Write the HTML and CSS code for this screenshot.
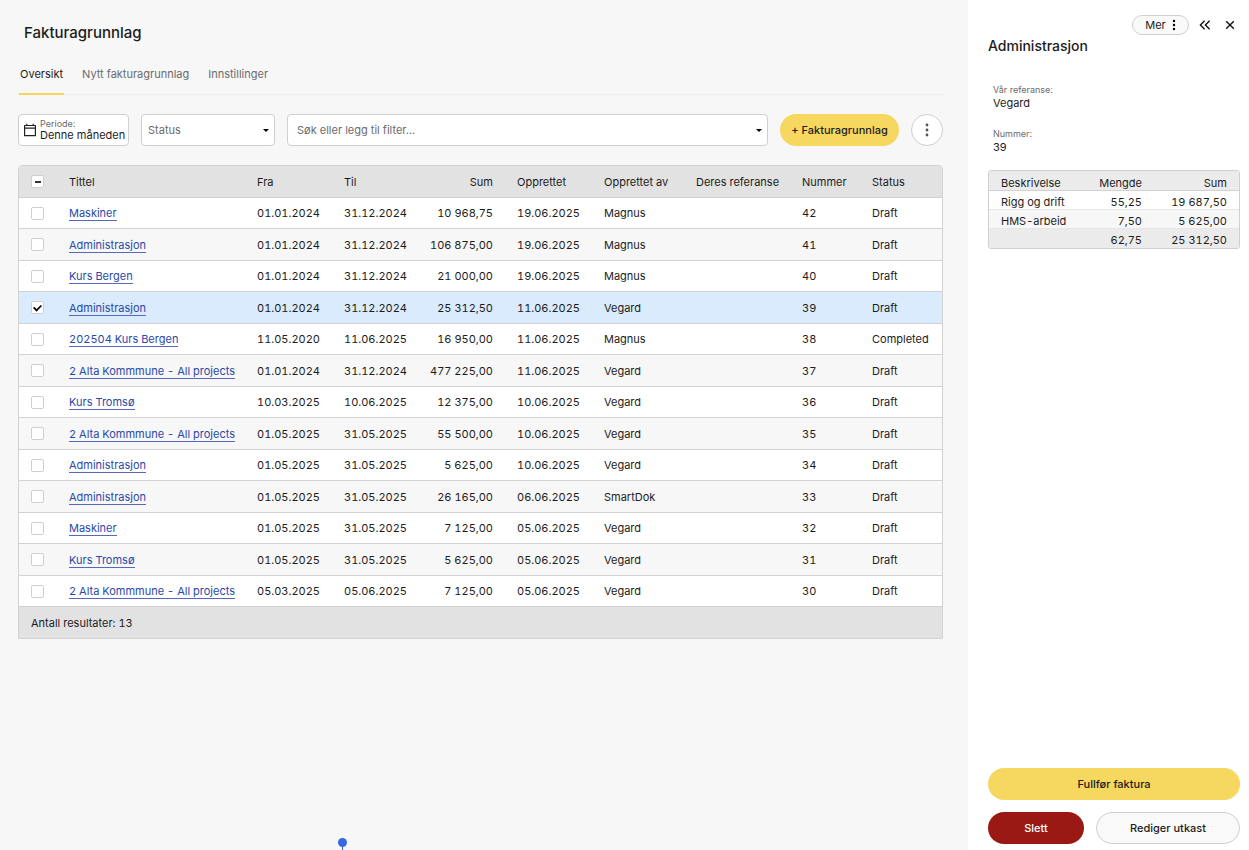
FILE: index.html
```html
<!DOCTYPE html>
<html lang="nb">
<head>
<meta charset="utf-8">
<title>Fakturagrunnlag</title>
<meta name="viewport" content="width=device-width, initial-scale=1">
<link rel="stylesheet" href="styles.css">
</head>
<body>
<div class="app">
  <main class="main">
    <h1 class="page-title">Fakturagrunnlag</h1>
    <nav class="tabs">
      <a class="tab tab-active" href="#oversikt">Oversikt</a>
      <a class="tab" href="#nytt">Nytt fakturagrunnlag</a>
      <a class="tab" href="#innstillinger">Innstillinger</a>
    </nav>

    <div class="toolbar">
      <button class="period" type="button">
        <svg class="period-icon" viewBox="0 0 14 14" aria-hidden="true"><path d="M1.6 2.5h10.8v10.2H1.6zM1.6 5.1h10.8M3.8 .8v1.7M10.2 .8v1.7" fill="none" stroke="#222" stroke-width="1.2" stroke-linejoin="round"/></svg>
        <span class="period-text"><span class="period-label">Periode:</span><span class="period-value">Denne måneden</span></span>
      </button>
      <div class="field field-status">
        <select class="control" aria-label="Status"><option>Status</option><option>Draft</option><option>Completed</option></select>
        <span class="caret"></span>
      </div>
      <div class="field field-search">
        <input class="control control-search" type="text" aria-label="Søk" placeholder="Søk eller legg til filter...">
        <span class="caret"></span>
      </div>
      <button class="btn btn-primary btn-new" type="button">+ Fakturagrunnlag</button>
      <button class="btn-round" type="button" aria-label="Flere valg"><svg class="kebab" viewBox="0 0 4 14" aria-hidden="true"><circle cx="2" cy="2" r="1.4"/><circle cx="2" cy="7" r="1.4"/><circle cx="2" cy="12" r="1.4"/></svg></button>
    </div>

    <div class="grid-frame">
      <table class="grid">
        <colgroup><col class="c-check"><col class="c-title"><col class="c-from"><col class="c-to"><col class="c-sum"><col class="c-created"><col class="c-by"><col class="c-ref"><col class="c-num"><col class="c-status"></colgroup>
        <thead>
          <tr><th><input class="check check-mixed" type="checkbox" aria-label="Velg alle"></th><th>Tittel</th><th>Fra</th><th>Til</th><th class="num">Sum</th><th>Opprettet</th><th>Opprettet av</th><th>Deres referanse</th><th>Nummer</th><th>Status</th></tr>
        </thead>
        <tbody>
          <tr><td><input class="check" type="checkbox" aria-label="Velg 42"></td><td><a class="link" href="#42">Maskiner</a></td><td>01.01.2024</td><td>31.12.2024</td><td class="num">10 968,75</td><td>19.06.2025</td><td>Magnus</td><td></td><td>42</td><td>Draft</td></tr>
          <tr><td><input class="check" type="checkbox" aria-label="Velg 41"></td><td><a class="link" href="#41">Administrasjon</a></td><td>01.01.2024</td><td>31.12.2024</td><td class="num">106 875,00</td><td>19.06.2025</td><td>Magnus</td><td></td><td>41</td><td>Draft</td></tr>
          <tr><td><input class="check" type="checkbox" aria-label="Velg 40"></td><td><a class="link" href="#40">Kurs Bergen</a></td><td>01.01.2024</td><td>31.12.2024</td><td class="num">21 000,00</td><td>19.06.2025</td><td>Magnus</td><td></td><td>40</td><td>Draft</td></tr>
          <tr class="selected"><td><input class="check" type="checkbox" aria-label="Velg 39" checked></td><td><a class="link" href="#39">Administrasjon</a></td><td>01.01.2024</td><td>31.12.2024</td><td class="num">25 312,50</td><td>11.06.2025</td><td>Vegard</td><td></td><td>39</td><td>Draft</td></tr>
          <tr><td><input class="check" type="checkbox" aria-label="Velg 38"></td><td><a class="link" href="#38">202504 Kurs Bergen</a></td><td>11.05.2020</td><td>11.06.2025</td><td class="num">16 950,00</td><td>11.06.2025</td><td>Magnus</td><td></td><td>38</td><td>Completed</td></tr>
          <tr><td><input class="check" type="checkbox" aria-label="Velg 37"></td><td><a class="link" href="#37">2 Alta Kommmune - All projects</a></td><td>01.01.2024</td><td>31.12.2024</td><td class="num">477 225,00</td><td>11.06.2025</td><td>Vegard</td><td></td><td>37</td><td>Draft</td></tr>
          <tr><td><input class="check" type="checkbox" aria-label="Velg 36"></td><td><a class="link" href="#36">Kurs Tromsø</a></td><td>10.03.2025</td><td>10.06.2025</td><td class="num">12 375,00</td><td>10.06.2025</td><td>Vegard</td><td></td><td>36</td><td>Draft</td></tr>
          <tr><td><input class="check" type="checkbox" aria-label="Velg 35"></td><td><a class="link" href="#35">2 Alta Kommmune - All projects</a></td><td>01.05.2025</td><td>31.05.2025</td><td class="num">55 500,00</td><td>10.06.2025</td><td>Vegard</td><td></td><td>35</td><td>Draft</td></tr>
          <tr><td><input class="check" type="checkbox" aria-label="Velg 34"></td><td><a class="link" href="#34">Administrasjon</a></td><td>01.05.2025</td><td>31.05.2025</td><td class="num">5 625,00</td><td>10.06.2025</td><td>Vegard</td><td></td><td>34</td><td>Draft</td></tr>
          <tr><td><input class="check" type="checkbox" aria-label="Velg 33"></td><td><a class="link" href="#33">Administrasjon</a></td><td>01.05.2025</td><td>31.05.2025</td><td class="num">26 165,00</td><td>06.06.2025</td><td>SmartDok</td><td></td><td>33</td><td>Draft</td></tr>
          <tr><td><input class="check" type="checkbox" aria-label="Velg 32"></td><td><a class="link" href="#32">Maskiner</a></td><td>01.05.2025</td><td>31.05.2025</td><td class="num">7 125,00</td><td>05.06.2025</td><td>Vegard</td><td></td><td>32</td><td>Draft</td></tr>
          <tr><td><input class="check" type="checkbox" aria-label="Velg 31"></td><td><a class="link" href="#31">Kurs Tromsø</a></td><td>01.05.2025</td><td>31.05.2025</td><td class="num">5 625,00</td><td>05.06.2025</td><td>Vegard</td><td></td><td>31</td><td>Draft</td></tr>
          <tr><td><input class="check" type="checkbox" aria-label="Velg 30"></td><td><a class="link" href="#30">2 Alta Kommmune - All projects</a></td><td>05.03.2025</td><td>05.06.2025</td><td class="num">7 125,00</td><td>05.06.2025</td><td>Vegard</td><td></td><td>30</td><td>Draft</td></tr>
        </tbody>
        <tfoot><tr><td colspan="10">Antall resultater: 13</td></tr></tfoot>
      </table>
    </div>
    <span class="marker"></span>
  </main>

  <aside class="panel">
    <div class="panel-actions">
      <button class="btn-more" type="button">Mer <svg class="more-dots" viewBox="0 0 4 12" aria-hidden="true"><circle cx="2" cy="2" r="1.2"/><circle cx="2" cy="6" r="1.2"/><circle cx="2" cy="10" r="1.2"/></svg></button>
      <button class="icon-btn" type="button" aria-label="Utvid"><svg class="icon" viewBox="0 0 12 12" aria-hidden="true"><path d="M5.6 1.8L1.4 6l4.2 4.2M10.6 1.8L6.4 6l4.2 4.2"/></svg></button>
      <button class="icon-btn" type="button" aria-label="Lukk"><svg class="icon" viewBox="0 0 12 12" aria-hidden="true"><path d="M2.2 2.2l7.6 7.6M9.8 2.2L2.2 9.8"/></svg></button>
    </div>
    <h2 class="panel-title">Administrasjon</h2>
    <dl class="facts">
      <div class="fact"><dt>Vår referanse:</dt><dd>Vegard</dd></div>
      <div class="fact"><dt>Nummer:</dt><dd>39</dd></div>
    </dl>
    <div class="lines-frame">
      <table class="lines">
        <thead><tr><th>Beskrivelse</th><th class="num">Mengde</th><th class="num">Sum</th></tr></thead>
        <tbody>
          <tr><td>Rigg og drift</td><td class="num">55,25</td><td class="num">19 687,50</td></tr>
          <tr><td>HMS-arbeid</td><td class="num">7,50</td><td class="num">5 625,00</td></tr>
        </tbody>
        <tfoot><tr><td></td><td class="num">62,75</td><td class="num">25 312,50</td></tr></tfoot>
      </table>
    </div>
    <div class="panel-footer">
      <button class="btn btn-primary btn-wide" type="button">Fullfør faktura</button>
      <button class="btn btn-danger" type="button">Slett</button>
      <button class="btn btn-plain" type="button">Rediger utkast</button>
    </div>
  </aside>
</div>
</body>
</html>
```

FILE: styles.css
```css
* { box-sizing: border-box; }

body {
  margin: 0;
  background: #f7f7f7;
  color: #1c1c1c;
  font: 11px/16px Inter, "Open Sans", sans-serif;
}

button, input, select { font: inherit; color: inherit; margin: 0; }
button { cursor: pointer; padding: 0; }

.app {
  display: grid;
  grid-template-columns: minmax(0, 1fr) 281px;
  min-height: 100vh;
}

.main { position: relative; padding: 22px 25px 24px 18px; }

.page-title {
  margin: 0 0 18px 6px;
  font-size: 15px;
  line-height: 22px;
  font-weight: 500;
}

.tabs {
  display: flex;
  gap: 17px;
  height: 33px;
  padding-left: 1px;
  border-bottom: 1px solid #eeeeee;
}
.tab {
  height: 33px;
  padding: 4px 1px 0;
  border-bottom: 2px solid transparent;
  color: #6b6b6b;
  text-decoration: none;
}
.tab-active { color: #1c1c1c; border-color: #f6d55c; }

.toolbar { display: flex; gap: 12px; margin: 19px 0; }

.period {
  display: flex;
  align-items: center;
  gap: 3px;
  width: 111px;
  height: 32px;
  padding: 0 4px;
  border: 1px solid #cfcfcf;
  border-radius: 4px;
  background: #fff;
  text-align: left;
  white-space: nowrap;
}
.period-icon { flex: none; width: 14px; height: 14px; }
.period-text { display: flex; flex-direction: column; }
.period-label { font-size: 9px; line-height: 11px; color: #6b6b6b; }
.period-value { line-height: 13px; }

.field { position: relative; }
.field-status { width: 134px; }
.field-search { flex: 1; }
.control {
  display: block;
  appearance: none;
  width: 100%;
  height: 32px;
  padding: 0 20px 0 6px;
  border: 1px solid #cfcfcf;
  border-radius: 4px;
  background: #fff;
  color: #6b6b6b;
}
.control-search { padding-left: 9px; }
.control::placeholder { color: #6b6b6b; }
.caret {
  position: absolute;
  right: 6px;
  top: 15px;
  border: 3px solid transparent;
  border-top-color: #000;
  border-bottom: 0;
  pointer-events: none;
}

.btn {
  height: 32px;
  border: 1px solid transparent;
  border-radius: 16px;
  font-weight: 500;
  text-align: center;
  white-space: nowrap;
}
.btn-primary { background: #f6d75f; }
.btn-danger { background: #9a1914; color: #fff; }
.btn-plain { background: #f9f9f9; border-color: #cfcfcf; }
.btn-new { width: 119px; }
.btn-round {
  display: grid;
  place-items: center;
  width: 32px;
  height: 32px;
  border: 1px solid #cfcfcf;
  border-radius: 50%;
  background: #fff;
}
.kebab { width: 4px; height: 14px; fill: #555; }

.grid-frame {
  border: 1px solid #d2d2d2;
  border-radius: 4px 4px 0 0;
  overflow: hidden;
}
.grid, .lines {
  width: 100%;
  table-layout: fixed;
  border-collapse: separate;
  border-spacing: 0;
  font-variant-numeric: tabular-nums;
}
.c-check { width: 38px; }
.c-title { width: 188px; }
.c-from, .c-to, .c-created { width: 87px; }
.c-sum { width: 86px; }
.c-by { width: 92px; }
.c-ref { width: 106px; }
.c-num { width: 70px; }
.c-status { width: 82px; }

.grid th, .grid td {
  height: 32px;
  padding: 0 0 0 12px;
  border-bottom: 1px solid #d2d2d2;
  text-align: left;
  font-weight: 400;
  white-space: nowrap;
}
.grid tbody td { background: #fff; }
.grid tbody tr:nth-child(odd) td { height: 31px; }
.grid tbody tr:nth-child(even) td { background: #f7f7f7; }
.grid tbody tr.selected td { background: #d9ebfd; }
.grid thead th, .grid tfoot td { background: #e2e2e2; }
.grid tfoot td { height: 31px; border-bottom: 0; }
.grid .num { padding: 0 12px 0 0; text-align: right; }

.link {
  color: #2a49a8;
  text-decoration: none;
  border-bottom: 1px solid #5468bd;
}

.check {
  appearance: none;
  display: grid;
  place-items: center;
  width: 13px;
  height: 13px;
  border: 1px solid #cfcfcf;
  border-radius: 2px;
  background: #fff;
}
.check:checked::before {
  content: "";
  width: 7px;
  height: 4px;
  border: solid #000;
  border-width: 0 0 2px 2px;
  transform: translateY(-1px) rotate(-45deg) scale(0.85);
}
.check-mixed::before {
  content: "";
  width: 6px;
  height: 2px;
  background: #333;
}

/* Pin at the lower edge of the work area */
.marker {
  position: absolute;
  left: 338px;
  bottom: 3px;
  width: 9px;
  height: 9px;
  border-radius: 50%;
  background: #3668e0;
}
.marker::after {
  content: "";
  position: absolute;
  left: 4px;
  top: 8px;
  width: 1px;
  height: 4px;
  background: #3668e0;
}

.panel {
  display: flex;
  flex-direction: column;
  padding: 15px 9px 6px 20px;
  background: #fff;
}
.panel-actions { display: flex; justify-content: flex-end; align-items: center; gap: 7px; padding-right: 1px; }
.btn-more {
  display: flex;
  align-items: center;
  justify-content: center;
  gap: 6px;
  width: 57px;
  height: 20px;
  border: 1px solid #cfcfcf;
  border-radius: 10px;
  background: #f9f9f9;
}
.more-dots { width: 4px; height: 12px; }
.icon-btn {
  display: grid;
  place-items: center;
  width: 18px;
  height: 20px;
  border: 0;
  background: none;
}
.icon { width: 12px; height: 12px; fill: none; stroke: #111; stroke-width: 1.4; }

.panel-title { margin: 0; font-size: 14px; line-height: 22px; font-weight: 500; }

.facts { display: flex; flex-direction: column; gap: 18px; margin: 27px 5px 16px; }
.fact dt { font-size: 9px; line-height: 12px; color: #6b6b6b; }
.fact dd { margin: 0; line-height: 14px; }

.lines-frame { border: 1px solid #cfcfcf; border-radius: 3px; overflow: hidden; }
.lines th, .lines td {
  height: 19px;
  padding: 4px 12px 0;
  line-height: 14px;
  border-bottom: 1px solid #e6e6e6;
  text-align: left;
  font-weight: 400;
  white-space: nowrap;
}
.lines th { height: 20px; background: #ebebeb; border-color: #d2d2d2; }
.lines th:first-child { width: 36%; }
.lines th:nth-child(2) { width: 30%; }
.lines tbody tr:nth-child(even) td { background: #f7f7f7; }
.lines tfoot td { padding-top: 3px; background: #ebebeb; border: 0; }
.lines .num { text-align: right; }

.panel-footer {
  display: grid;
  grid-template-columns: 2fr 3fr;
  gap: 12px;
  margin-top: auto;
}
.btn-wide { grid-column: 1 / -1; }
```
